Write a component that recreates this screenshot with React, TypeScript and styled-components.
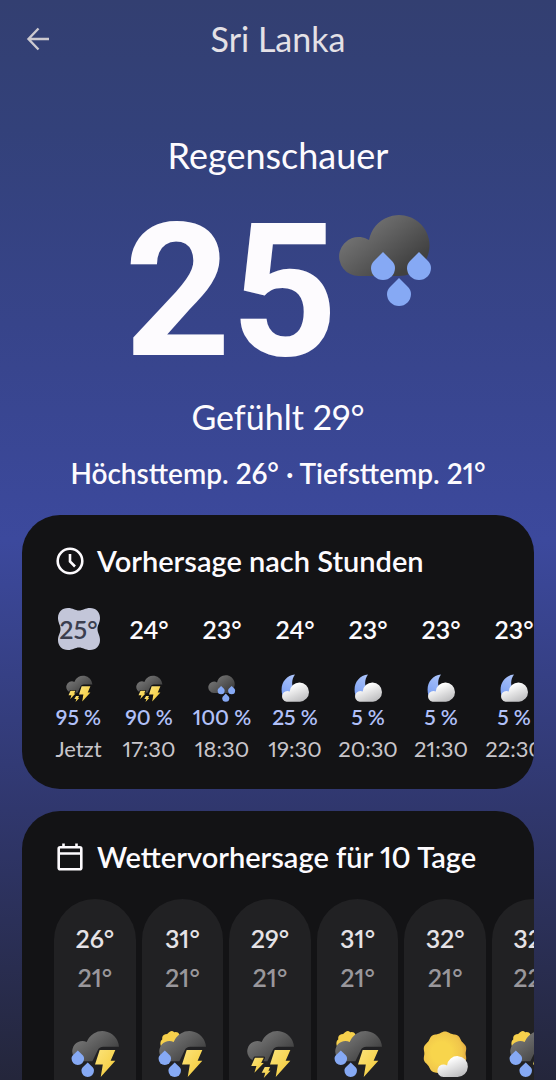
import React, { useId } from "react";
import styled, { createGlobalStyle } from "styled-components";

const GlobalStyle = createGlobalStyle`
  *, *::before, *::after { box-sizing: border-box; }
  html, body { margin: 0; background: #24263b; }
  body {
    font-family: Lato, "Liberation Sans", sans-serif;
    font-variant-numeric: proportional-nums;
    color: #fdfbfe;
  }
`;

const Page = styled.main`
  height: 100vh;
  overflow: hidden;
  display: flex;
  flex-direction: column;
  background: linear-gradient(180deg, #333f71 0%, #33417a 12%, #37448a 30%, #3c499d 50%, #30376d 75%, #24263b 100%);
`;

const TopBar = styled.header`
  flex: none;
  display: grid;
  grid-template-columns: 32px 1fr 32px;
  align-items: center;
  height: 78px;
  padding: 0 22px;
`;

const BackButton = styled.button`
  display: flex;
  justify-content: center;
  padding: 0;
  border: 0;
  background: none;
  color: #cdcad0;
  cursor: pointer;
`;

const Place = styled.h1`
  margin: 0;
  text-align: center;
  font-size: 34px;
  line-height: 40px;
  font-weight: 400;
  color: #e4e1e6;
`;

const Current = styled.section`
  flex: none;
  display: flex;
  flex-direction: column;
  align-items: center;
  padding: 57px 16px 26px;
`;

const Condition = styled.p`
  margin: 0;
  font-size: 36px;
  line-height: 40px;
`;

const Reading = styled.div`
  display: flex;
  align-items: flex-start;
  margin: 36px 0 26px;
  padding-left: 2px;
`;

const BigTemp = styled.span`
  font-family: Roboto, "Liberation Sans", sans-serif;
  font-size: 186px;
  line-height: 160px;
  font-weight: 700;
`;

const FeelsLike = styled.p`
  margin: 0;
  font-size: 34px;
  line-height: 40px;
`;

const Range = styled.p`
  margin: 20px 0 0;
  font-size: 28px;
  line-height: 32px;
  font-weight: 600;
  white-space: nowrap;
`;

const Card = styled.section`
  flex: none;
  margin: 0 22px 22px;
  padding: 29px 0 26px 32px;
  border-radius: 38px;
  background: #131315;
  overflow: hidden;
`;

const CardHead = styled.header`
  display: flex;
  align-items: center;
  gap: 11px;
`;

const CardTitle = styled.h2`
  margin: 0;
  font-size: 29px;
  line-height: 34px;
  font-weight: 600;
`;

const HourList = styled.ol`
  display: flex;
  gap: 19px;
  margin: 27px 0 0;
  padding: 0;
  list-style: none;
`;

const Hour = styled.li<{ $now?: boolean }>`
  flex: none;
  width: ${(p) => (p.$now ? "49px" : "54px")};
  display: flex;
  flex-direction: column;
  align-items: center;
  white-space: nowrap;
`;

const HourTemp = styled.span<{ $now?: boolean }>`
  display: grid;
  place-items: center;
  width: 48px;
  height: 48px;
  margin-bottom: 21px;
  font-size: 25px;
  line-height: 32px;
  font-weight: 600;
  color: ${(p) => (p.$now ? "#3b3e4f" : "#fdfbfe")};
  & > * { grid-area: 1 / 1; }
`;

const Chance = styled.span`
  margin-top: 2px;
  font-size: 21px;
  line-height: 26px;
  font-weight: 600;
  color: #b1c0f8;
`;

const Time = styled.span`
  margin-top: 5px;
  font-size: 22px;
  line-height: 28px;
  color: #c8c5ca;
`;

const DayList = styled.ol`
  display: flex;
  gap: 6px;
  margin: 25px 0 0;
  padding: 0;
  list-style: none;
`;

const Day = styled.li`
  flex: none;
  width: 17%;
  height: 270px;
  padding-top: 23px;
  display: flex;
  flex-direction: column;
  align-items: center;
  border-radius: 41px;
  background: #212123;
`;

const DayTemp = styled.span<{ $low?: boolean }>`
  margin-bottom: ${(p) => (p.$low ? "35px" : "7px")};
  font-size: 25px;
  line-height: 32px;
  font-weight: 600;
  color: ${(p) => (p.$low ? "#99979b" : "#e5e2e6")};
`;

type Kind = "showers" | "storm" | "rainStorm" | "sunStorm" | "night" | "sunny";

function Drop({ x, y }: { x: number; y: number }) {
  return <path transform={`translate(${x} ${y})`} fill="#86a9f4" d="M0 0 L8 8 C11 11 12 13 12 16 A12 12 0 0 1 -12 16 C-12 13 -11 11 -8 8 Z" />;
}

/* A disc with a softly scalloped rim. */
const SUN = Array.from({ length: 144 }, (_, i) => {
  const a = (i / 144) * Math.PI * 2;
  const r = 41 + 1.3 * Math.cos(10 * (a + Math.PI / 2));
  return `${i ? "L" : "M"}${(48 + r * Math.cos(a)).toFixed(2)} ${(49 + r * Math.sin(a)).toFixed(2)}`;
}).join("") + "Z";

function WeatherIcon({ kind, size, label, edge = "#131315" }: { kind: Kind; size: number; label: string; edge?: string }) {
  const id = useId();
  const dark = `url(#${id}d)`;
  const light = `url(#${id}l)`;
  const gold = `url(#${id}g)`;
  const moon = `url(#${id}m)`;
  const storm = kind === "storm" || kind === "rainStorm" || kind === "sunStorm";
  return (
    <svg width={size} height={size} viewBox="0 0 96 96" role="img" aria-label={label}>
      <defs>
        <linearGradient id={`${id}d`} x1="0.1" y1="0.1" x2="0.85" y2="0.75">
          <stop offset="0" stopColor="#7b7b7b" />
          <stop offset="0.45" stopColor="#626262" />
          <stop offset="1" stopColor="#414141" />
        </linearGradient>
        <linearGradient id={`${id}l`} x1="0.2" y1="0" x2="0.8" y2="1">
          <stop offset="0.2" stopColor="#ffffff" />
          <stop offset="1" stopColor="#b9b9bb" />
        </linearGradient>
        <linearGradient id={`${id}g`} x1="0" y1="0" x2="1" y2="1">
          <stop offset="0" stopColor="#fce47c" />
          <stop offset="1" stopColor="#f3c935" />
        </linearGradient>
        <linearGradient id={`${id}m`} x1="0.6" y1="0" x2="0.3" y2="1">
          <stop offset="0" stopColor="#a9c2fa" />
          <stop offset="1" stopColor="#7da1f3" />
        </linearGradient>
        <radialGradient id={`${id}s`} cx="0.42" cy="0.48" r="0.6">
          <stop offset="0.4" stopColor="#f8d54c" />
          <stop offset="0.8" stopColor="#f0c54b" />
          <stop offset="1" stopColor="#dfa73f" />
        </radialGradient>
      </defs>
      {kind === "sunStorm" && (
        <path fill="#f6d04c" d="M8 36 C5 29 7 24 10 22 Q9 14 16 12 Q20 12 22 9 Q28 3 33 8 Q40 6 43 12 L42 34 Z" />
      )}
      {kind === "showers" && (
        <>
          <path fill={dark} d="M21 65 A19.500 19.500 0 1 1 31 29 A30.500 30.500 0 1 1 72 63 Q67 65 61 65 Z" />
          <Drop x={45} y={41} />
          <Drop x={81} y={41} />
          <Drop x={61} y={67} />
        </>
      )}
      {storm && (
        <>
          <path fill={dark} d="M21 64 A19.500 19.500 0 1 1 32 27 A32 32 0 0 1 94 36 H64 Q56 36 53 43 L43 64 Z" />
          <path fill={gold} d="M57 42 H87 L78 63 H87 L59 94 L63 70 H48 Z" />
        </>
      )}
      {kind === "storm" && (
        <g fill={gold} stroke={edge} strokeWidth="5" paintOrder="stroke" strokeLinejoin="round">
          <path d="M19 57 H36 L31 67 H36 L18 86 L22 73 H12 Z" />
          <path d="M38 75 H48 L45 82 H49 L36 96 L39 86 H32 Z" />
        </g>
      )}
      {(kind === "rainStorm" || kind === "sunStorm") && (
        <>
          <Drop x={15} y={43} />
          <Drop x={34} y={66} />
        </>
      )}
      {kind === "night" && (
        <>
          <path fill={moon} d="M48 2 C14 5 -6 38 5 74 L44 70 L40 44 C36 28 39 15 48 2 Z" />
          <path fill={light} d="M19 95 A18.500 18.500 0 1 1 30 60 A33 33 0 1 1 65 95 Z" />
        </>
      )}
      {kind === "sunny" && (
        <>
          <path fill={`url(#${id}s)`} d={SUN} />
          <path fill={light} d="M46 94 A12 12 0 1 1 52 72 A20 20 0 1 1 72 94 Z" />
        </>
      )}
    </svg>
  );
}

const HOURS: { temp: number; kind: Kind; label: string; chance: number; time: string }[] = [
  { temp: 25, kind: "storm", label: "Gewitter", chance: 95, time: "Jetzt" },
  { temp: 24, kind: "storm", label: "Gewitter", chance: 90, time: "17:30" },
  { temp: 23, kind: "showers", label: "Regenschauer", chance: 100, time: "18:30" },
  { temp: 24, kind: "night", label: "Bewölkt", chance: 25, time: "19:30" },
  { temp: 23, kind: "night", label: "Bewölkt", chance: 5, time: "20:30" },
  { temp: 23, kind: "night", label: "Bewölkt", chance: 5, time: "21:30" },
  { temp: 23, kind: "night", label: "Bewölkt", chance: 5, time: "22:30" },
];

const DAYS: { high: number; low: number; kind: Kind; label: string }[] = [
  { high: 26, low: 21, kind: "rainStorm", label: "Gewitterregen" },
  { high: 31, low: 21, kind: "sunStorm", label: "Vereinzelte Gewitter" },
  { high: 29, low: 21, kind: "storm", label: "Gewitter" },
  { high: 31, low: 21, kind: "sunStorm", label: "Vereinzelte Gewitter" },
  { high: 32, low: 21, kind: "sunny", label: "Meist sonnig" },
  { high: 32, low: 22, kind: "sunStorm", label: "Vereinzelte Gewitter" },
];

export default function App() {
  return (
    <>
      <GlobalStyle />
      <Page>
        <TopBar>
          <BackButton aria-label="Zurück">
            <svg width="24" height="24" viewBox="0 0 24 24" fill="none" stroke="currentColor" strokeWidth="2.400">
              <path d="M23 12H3M12.500 1.500L2.500 12L12.500 22.500" />
            </svg>
          </BackButton>
          <Place>Sri Lanka</Place>
        </TopBar>
        <Current>
          <Condition>Regenschauer</Condition>
          <Reading>
            <BigTemp>25</BigTemp>
            <WeatherIcon kind="showers" size={96} label="Regenschauer" />
          </Reading>
          <FeelsLike>Gefühlt 29°</FeelsLike>
          <Range>Höchsttemp. 26° · Tiefsttemp. 21°</Range>
        </Current>
        <Card>
          <CardHead>
            <svg width="32" height="32" viewBox="0 0 32 32" fill="none" stroke="currentColor" strokeWidth="2.600" aria-hidden="true">
              <circle cx="16" cy="16" r="12.300" />
              <path d="M16 9V16.500L21 21.500" />
            </svg>
            <CardTitle>Vorhersage nach Stunden</CardTitle>
          </CardHead>
          <HourList>
            {HOURS.map((h, i) => (
              <Hour key={h.time} $now={i === 0}>
                <HourTemp $now={i === 0}>
                  {i === 0 && (
                    <svg width="44" height="44" viewBox="0 0 44 44" aria-hidden="true">
                      <path fill="#c3c6d9" d="M22 3.500 C26 3.500 28 1 33 1 C39 1 43 5 43 11 C43 16 40.500 18 40.500 22 C40.500 26 43 28 43 33 C43 39 39 43 33 43 C28 43 26 40.500 22 40.500 C18 40.500 16 43 11 43 C5 43 1 39 1 33 C1 28 3.500 26 3.500 22 C3.500 18 1 16 1 11 C1 5 5 1 11 1 C16 1 18 3.500 22 3.500 Z" />
                    </svg>
                  )}
                  <span>{h.temp}°</span>
                </HourTemp>
                <WeatherIcon kind={h.kind} size={28} label={h.label} />
                <Chance>{h.chance} %</Chance>
                <Time>{h.time}</Time>
              </Hour>
            ))}
          </HourList>
        </Card>
        <Card>
          <CardHead>
            <svg width="32" height="32" viewBox="0 0 32 32" fill="none" stroke="currentColor" strokeWidth="2.600" aria-hidden="true">
              <rect x="4.700" y="6.200" width="22.600" height="22" rx="1.500" />
              <path d="M4.700 12.500H27.300M9.500 2.500V6.500M22.500 2.500V6.500" />
            </svg>
            <CardTitle>Wettervorhersage für 10 Tage</CardTitle>
          </CardHead>
          <DayList>
            {DAYS.map((d, i) => (
              <Day key={i}>
                <DayTemp>{d.high}°</DayTemp>
                <DayTemp $low>{d.low}°</DayTemp>
                <WeatherIcon kind={d.kind} size={50} label={d.label} edge="#212123" />
              </Day>
            ))}
          </DayList>
        </Card>
      </Page>
    </>
  );
}
